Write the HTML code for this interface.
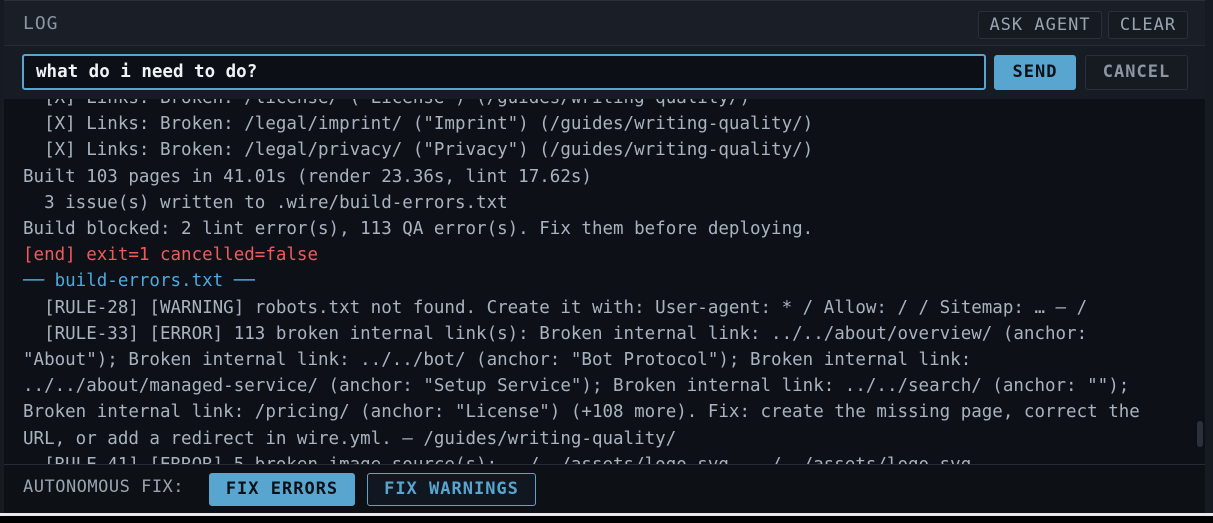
<!DOCTYPE html>
<html><head><meta charset="utf-8"><style>
html,body{margin:0;padding:0;width:1213px;height:523px;background:#000;overflow:hidden}
body{font-family:"DejaVu Sans Mono","Liberation Mono",monospace;}
.panel{position:absolute;left:4px;top:0;width:1201px;height:513px;background:#0d1117;border-top:1px solid #2a303a}
.strip{position:absolute;left:1205px;top:0;width:8px;height:513px;background:#161b22}
.lstrip{position:absolute;left:0;top:0;width:4px;height:513px;background:#161b22}
.white{position:absolute;left:0;top:513px;width:1213px;height:3px;background:#e8e8e8}
.hdr{position:absolute;left:0;top:0;width:1201px;height:44px;background:#1a1f27;border-bottom:1px solid #262c36}
.hdr .t{position:absolute;left:19px;top:12px;font-size:18px;letter-spacing:1px;color:#8b95a3}
.btn{position:absolute;box-sizing:border-box;border:1px solid #2a303a;border-radius:3px;font-size:17px;letter-spacing:1px;color:#9aa4b1;text-align:center;background:#161b22}
.inrow{position:absolute;left:0;top:45px;width:1201px;height:53px;background:#171c24}
.inp{position:absolute;left:18px;top:8px;width:964px;height:36px;box-sizing:border-box;border:2px solid #58a6cf;border-radius:3px;background:#0c0f15;color:#f0f3f6;font-size:17.5px;font-weight:bold;padding:6px 0 0 12px}
.log{position:absolute;left:0;top:98px;width:1192px;height:365px;overflow:hidden;color:#a9b3bf;font-size:17.5px;line-height:26.2px}
.log div{white-space:pre;padding-left:19px}
.red{color:#f25a5a}
.blue{color:#4ea9dd}
.ftr{position:absolute;left:0;top:463px;width:1201px;height:50px;background:#0d1015;border-top:1px solid #262c36}
.ftr .l{position:absolute;left:19px;top:12px;font-size:17px;color:#9aa4b1;letter-spacing:.5px}
.sb{position:absolute;left:1193px;top:420px;width:6px;height:26px;background:#2b313b;border-radius:3px}
</style></head><body>
<div class="lstrip"></div>
<div class="panel">
 <div class="hdr"><div class="t">LOG</div>
  <div class="btn" style="left:974px;top:10px;width:124px;height:28px;line-height:26px">ASK AGENT</div>
  <div class="btn" style="left:1104px;top:10px;width:80px;height:28px;line-height:26px">CLEAR</div>
 </div>
 <div class="inrow">
  <div class="inp">what do i need to do?</div>
  <div class="btn" style="left:990px;top:9px;width:82px;height:35px;line-height:33px;background:#58a6cf;border-color:#58a6cf;color:#0d1117;font-weight:bold">SEND</div>
  <div class="btn" style="left:1081px;top:9px;width:103px;height:35px;line-height:33px;font-weight:bold;color:#8b95a3">CANCEL</div>
 </div>
 <div class="log" style="top:98px"><div style="margin-top:-14px">  [X] Links: Broken: /license/ ("License") (/guides/writing-quality/)</div><div>  [X] Links: Broken: /legal/imprint/ ("Imprint") (/guides/writing-quality/)</div><div>  [X] Links: Broken: /legal/privacy/ ("Privacy") (/guides/writing-quality/)</div><div>Built 103 pages in 41.01s (render 23.36s, lint 17.62s)</div><div>  3 issue(s) written to .wire/build-errors.txt</div><div>Build blocked: 2 lint error(s), 113 QA error(s). Fix them before deploying.</div><div class="red">[end] exit=1 cancelled=false</div><div class="blue">── build-errors.txt ──</div><div>  [RULE-28] [WARNING] robots.txt not found. Create it with: User-agent: * / Allow: / / Sitemap: … – /</div><div>  [RULE-33] [ERROR] 113 broken internal link(s): Broken internal link: ../../about/overview/ (anchor:</div><div>"About"); Broken internal link: ../../bot/ (anchor: "Bot Protocol"); Broken internal link:</div><div>../../about/managed-service/ (anchor: "Setup Service"); Broken internal link: ../../search/ (anchor: "");</div><div>Broken internal link: /pricing/ (anchor: "License") (+108 more). Fix: create the missing page, correct the</div><div>URL, or add a redirect in wire.yml. – /guides/writing-quality/</div><div>  [RULE-41] [ERROR] 5 broken image source(s): ../../assets/logo.svg, ../../assets/logo.svg</div></div>
 <div class="sb"></div>
 <div class="ftr"><div class="l">AUTONOMOUS FIX:</div>
  <div class="btn" style="left:205px;top:8px;width:146px;height:33px;line-height:31px;background:#58a6cf;border-color:#58a6cf;color:#0d1117;font-weight:bold">FIX ERRORS</div>
  <div class="btn" style="left:363px;top:8px;width:169px;height:33px;line-height:31px;border-color:#58a6cf;background:#111720;color:#58a6cf;font-weight:bold">FIX WARNINGS</div>
 </div>
</div>
<div class="strip"></div>
<div class="white"></div>
</body></html>
